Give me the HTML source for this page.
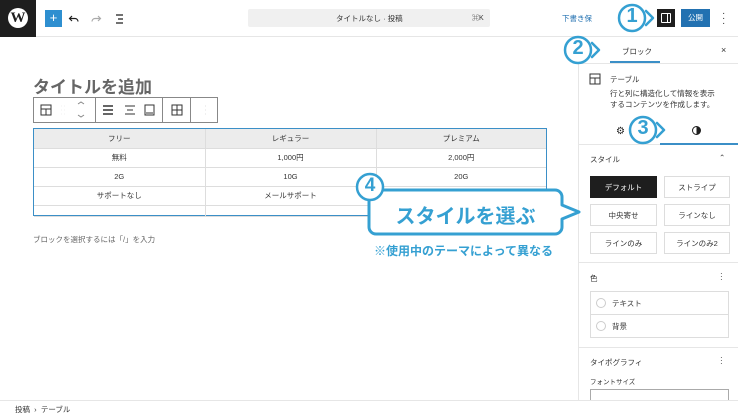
<!DOCTYPE html>
<html><head><meta charset="utf-8"><style>
*{box-sizing:border-box;margin:0;padding:0}
body{width:738px;height:416px;overflow:hidden;background:#fff;font-family:"Liberation Sans","Noto Sans CJK JP",sans-serif;color:#1e1e1e;position:relative}
.a{position:absolute}
.t{font-size:7.5px;color:#333;white-space:nowrap}
.btn{position:absolute;border:1px solid #ddd;font-size:7.5px;color:#333;display:flex;align-items:center;justify-content:center;background:#fff}
table{border-collapse:collapse;width:100%;table-layout:fixed}
td{height:19px;border-right:1px solid #ddd;border-bottom:1px solid #ddd;text-align:center;font-size:7.5px;color:#333}
td:last-child{border-right:none}
</style></head><body>
<!-- top bar -->
<div class="a" style="left:0;top:0;width:738px;height:37px;border-bottom:1px solid #e6e6e6"></div>
<div class="a" style="left:0;top:0;width:36px;height:37px;background:#1e1e1e"></div>
<div class="a" style="left:8px;top:8px;width:20px;height:20px;border-radius:50%;background:#fff;color:#1e1e1e;font:bold 15px 'Liberation Serif',serif;text-align:center;line-height:20px">W</div>
<div class="a" style="left:45px;top:10px;width:17px;height:17px;background:#2e8fd0;color:#fff;font-size:13px;text-align:center;line-height:16px">+</div>
<svg class="a" style="left:68px;top:12px" width="56" height="14" fill="none" stroke="#1e1e1e" stroke-width="1.2"><path d="M4 4 L1.5 6.5 4 9 M2 6.5h5a3 3 0 0 1 3 3"/><path stroke="#aaa" d="M30 4 L32.5 6.5 30 9 M32 6.5h-5a3 3 0 0 0-3 3"/><path d="M48 3h7M50 7h5M48 11h7"/></svg>
<div class="a" style="left:248px;top:9px;width:242px;height:18px;background:#f0f0f0;border-radius:2px"></div>
<div class="a t" style="left:336px;top:13px">タイトルなし · 投稿</div>
<div class="a t" style="left:472px;top:13px;font-size:7px">⌘K</div>
<div class="a t" style="left:562px;top:13px;color:#2271b1">下書き保</div>
<div class="a" style="left:657px;top:9px;width:18px;height:18px;background:#1e1e1e"></div>
<div class="a" style="left:661px;top:13px;width:10px;height:10px;border:1.3px solid #fff;border-radius:1px"></div>
<div class="a" style="left:667px;top:13px;width:1.3px;height:10px;background:#fff"></div>
<div class="a" style="left:681px;top:9px;width:29px;height:18px;background:#2271b1;color:#fff;font-size:7.5px;text-align:center;line-height:18px">公開</div>
<div class="a" style="left:722px;top:11px;font-size:10px;line-height:5px;color:#333">·<br>·<br>·</div>
<!-- editor -->
<div class="a" style="left:33px;top:79px;font-size:17px;line-height:18px;font-weight:bold;color:#666">タイトルを追加</div>
<div class="a" style="left:33px;top:97px;width:185px;height:26px;border:1px solid #888;background:#fff"></div>
<div class="a" style="left:95px;top:97px;width:1px;height:26px;background:#888"></div>
<div class="a" style="left:162px;top:97px;width:1px;height:26px;background:#888"></div>
<div class="a" style="left:190px;top:97px;width:1px;height:26px;background:#888"></div>
<svg class="a" style="left:33px;top:97px" width="185" height="26" fill="none" stroke="#333" stroke-width="1"><rect x="8" y="8" width="10" height="10"/><path d="M8 12h10M13 12v6"/><path d="M28 9h.1M31 9h.1M28 13h.1M31 13h.1M28 17h.1M31 17h.1" stroke-width="1.5" stroke="#999"/><path d="M45 7l3-2 3 2M45 18l3 2 3-2" stroke="#888"/><path d="M70 9h10M70 13h10M70 17h10" stroke-width="1.5"/><path d="M92 9h10M94 13h6M92 17h10"/><rect x="112" y="8" width="9" height="10"/><path d="M113 16h7"/><rect x="139" y="8" width="10" height="10"/><path d="M139 13h10M144 8v10"/><path d="M172 9h.1M172 13h.1M172 17h.1" stroke-width="1.5"/></svg>
<div class="a" style="left:33px;top:128px;width:514px;height:88px;border:1px solid #3b8fc7">
<table><colgroup><col style="width:171px"><col style="width:171px"><col></colgroup><tr style="background:#ececec"><td>フリー</td><td>レギュラー</td><td>プレミアム</td></tr>
<tr><td>無料</td><td>1,000円</td><td>2,000円</td></tr>
<tr><td>2G</td><td>10G</td><td>20G</td></tr>
<tr><td>サポートなし</td><td>メールサポート</td><td></td></tr>
<tr><td style="height:11px"></td><td style="height:11px"></td><td style="height:11px"></td></tr></table></div>
<div class="a t" style="left:33px;top:234px;color:#666">ブロックを選択するには「/」を入力</div>
<!-- status bar -->
<div class="a" style="left:0;top:400px;width:738px;height:16px;border-top:1px solid #e6e6e6;background:#fff"></div>
<div class="a t" style="left:15px;top:404px">投稿 &nbsp;›&nbsp; テーブル</div>
<!-- sidebar -->
<div class="a" style="left:578px;top:37px;width:1px;height:363px;background:#e6e6e6"></div>
<div class="a" style="left:578px;top:63px;width:160px;height:1px;background:#e6e6e6"></div>
<div class="a" style="left:610px;top:61px;width:50px;height:2px;background:#3b8fc7"></div>
<div class="a t" style="left:622px;top:46px">ブロック</div>
<div class="a t" style="left:721px;top:45px;font-size:9px">×</div>
<svg class="a" style="left:589px;top:73px" width="12" height="12" fill="none" stroke="#333"><rect x="1" y="1" width="10" height="10"/><path d="M1 5h10M6 5v6"/></svg>
<div class="a t" style="left:610px;top:74px">テーブル</div>
<div class="a t" style="left:610px;top:88px;line-height:11px">行と列に構造化して情報を表示<br>するコンテンツを作成します。</div>
<div class="a" style="left:616px;top:126px;font-size:10px">⚙</div>
<div class="a" style="left:692px;top:126px;width:9px;height:9px;border-radius:50%;border:1.3px solid #1e1e1e;background:linear-gradient(90deg,#fff 50%,#1e1e1e 50%)"></div>
<div class="a" style="left:578px;top:144px;width:160px;height:1px;background:#e6e6e6"></div>
<div class="a" style="left:660px;top:143px;width:78px;height:2px;background:#3b8fc7"></div>
<div class="a t" style="left:590px;top:154px">スタイル</div>
<div class="a t" style="left:719px;top:153px">⌃</div>
<div class="btn" style="left:590px;top:176px;width:67px;height:22px;background:#1e1e1e;color:#fff;border-color:#1e1e1e">デフォルト</div>
<div class="btn" style="left:664px;top:176px;width:66px;height:22px">ストライプ</div>
<div class="btn" style="left:590px;top:204px;width:67px;height:22px">中央寄せ</div>
<div class="btn" style="left:664px;top:204px;width:66px;height:22px">ラインなし</div>
<div class="btn" style="left:590px;top:232px;width:67px;height:22px">ラインのみ</div>
<div class="btn" style="left:664px;top:232px;width:66px;height:22px">ラインのみ2</div>
<div class="a" style="left:578px;top:262px;width:160px;height:1px;background:#e6e6e6"></div>
<div class="a t" style="left:590px;top:273px">色</div>
<div class="a" style="left:720px;top:272px;font-size:8px;line-height:3px;color:#333">·<br>·<br>·</div>
<div class="a" style="left:590px;top:291px;width:139px;height:47px;border:1px solid #ddd"></div>
<div class="a" style="left:590px;top:314px;width:139px;height:1px;background:#ddd"></div>
<div class="a" style="left:596px;top:298px;width:10px;height:10px;border-radius:50%;border:1px solid #ccc"></div>
<div class="a" style="left:596px;top:321px;width:10px;height:10px;border-radius:50%;border:1px solid #ccc"></div>
<div class="a t" style="left:612px;top:298px">テキスト</div>
<div class="a t" style="left:612px;top:321px">背景</div>
<div class="a" style="left:578px;top:347px;width:160px;height:1px;background:#e6e6e6"></div>
<div class="a t" style="left:590px;top:357px">タイポグラフィ</div>
<div class="a" style="left:720px;top:356px;font-size:8px;line-height:3px;color:#333">·<br>·<br>·</div>
<div class="a t" style="left:590px;top:376px;font-size:6.5px">フォントサイズ</div>
<div class="a" style="left:590px;top:389px;width:139px;height:11px;border:1px solid #aaa;border-bottom:none"></div>
<!-- annotations -->
<svg class="a" style="left:0;top:0" width="738" height="416" fill="none" stroke="#35a0d2" stroke-width="2.5" stroke-linejoin="round" stroke-linecap="round">
<circle cx="632" cy="18" r="13" fill="#fff"/><path d="M646 11l7 7-7 7"/>
<circle cx="578" cy="50" r="13" fill="#fff"/><path d="M592 43l7 7-7 7"/>
<circle cx="643" cy="130" r="13" fill="#fff"/><path d="M657 123l7 7-7 7"/>
<path d="M381 190H555a7 7 0 0 1 7 7v8l17 7-17 7v8a7 7 0 0 1-7 7H376a7 7 0 0 1-7-7v-30" fill="#fff" stroke-width="3"/>
<circle cx="370" cy="187" r="13" fill="#fff"/>
</svg>
<div class="a" style="left:620px;top:5px;width:24px;text-align:center;font-size:20px;font-weight:bold;color:#35a0d2">1</div>
<div class="a" style="left:566px;top:37px;width:24px;text-align:center;font-size:20px;font-weight:bold;color:#35a0d2">2</div>
<div class="a" style="left:631px;top:117px;width:24px;text-align:center;font-size:20px;font-weight:bold;color:#35a0d2">3</div>
<div class="a" style="left:358px;top:175px;width:24px;text-align:center;font-size:19px;font-weight:bold;color:#35a0d2">4</div>
<div class="a" style="left:369px;top:200px;width:193px;text-align:center;font-size:20px;font-weight:bold;color:#35a0d2">スタイルを選ぶ</div>
<div class="a" style="left:374px;top:242px;font-size:12px;font-weight:bold;color:#35a0d2">※使用中のテーマによって異なる</div>
</body></html>
